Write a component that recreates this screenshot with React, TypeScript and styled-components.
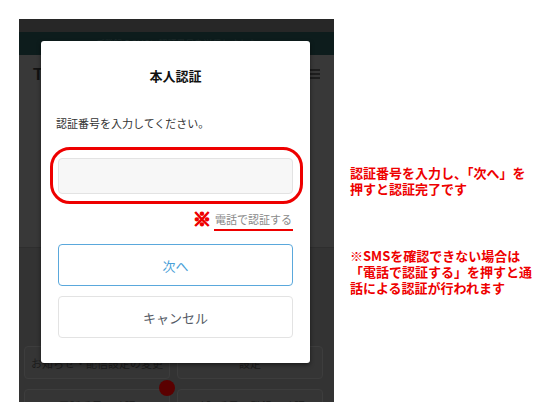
import styled, { createGlobalStyle } from 'styled-components';

const GlobalStyle = createGlobalStyle`
  *, *::before, *::after {
    box-sizing: border-box;
  }
  html, body {
    margin: 0;
    padding: 0;
    background: #ffffff;
  }
  body {
    font-family: "Noto Sans CJK JP", "Noto Sans", sans-serif;
  }
`;

const Page = styled.div`
  width: 553px;
  height: 412px;
  display: flex;
  align-items: flex-start;
  overflow: hidden;
`;

const Phone = styled.div`
  position: relative;
  width: 315px;
  height: 383px;
  margin: 19px 0 0 19px;
  background: #333333;
  display: flex;
  flex-direction: column;
  overflow: hidden;
  flex-shrink: 0;
`;

const StatusBar = styled.div`
  flex-shrink: 0;
  height: 13px;
  background: #272727;
`;

const Band = styled.div`
  flex-shrink: 0;
  height: 23px;
  background: #0d1c1c;
  display: flex;
  justify-content: center;
  align-items: center;
  font-size: 9px;
  color: #1e2b2b;
`;

const Header = styled.div`
  flex-shrink: 0;
  height: 193px;
  background: #383838;
  border-bottom: 1px solid #2e2e2e;
  display: flex;
  justify-content: space-between;
  align-items: flex-start;
  padding: 10px 14px 0 14px;
`;

const Logo = styled.div`
  font-family: "Liberation Sans", Arial, sans-serif;
  font-weight: bold;
  font-size: 17px;
  color: #121212;
`;

const Burger = styled.div`
  display: flex;
  flex-direction: column;
  gap: 2px;
  margin-top: 4px;
  span {
    display: block;
    width: 11px;
    height: 2px;
    background: #1e1e1e;
  }
`;

const Body = styled.div`
  flex-shrink: 0;
  padding: 98px 11px 0 5px;
  display: grid;
  grid-template-columns: 1fr 1fr;
  grid-auto-rows: 33px;
  row-gap: 10px;
  column-gap: 7px;
  position: relative;
`;

const Card = styled.div`
  background: #353535;
  border: 1px solid #3d3d3d;
  border-radius: 4px;
  display: flex;
  justify-content: center;
  align-items: center;
  font-size: 11px;
  color: #1c1c1c;
`;

const Dot = styled.div`
  position: absolute;
  left: 140px;
  top: 132px;
  width: 16px;
  height: 16px;
  border-radius: 50%;
  background: #5a0000;
`;

const Modal = styled.div`
  position: absolute;
  left: 22px;
  top: 22px;
  width: 269px;
  padding: 26px 17px 25px;
  background: #ffffff;
  border-radius: 3px;
  box-shadow: 0 2px 4px rgba(0, 0, 0, 0.5);
  display: flex;
  flex-direction: column;
`;

const Title = styled.h2`
  margin: 0;
  font-size: 13px;
  line-height: 18px;
  font-weight: bold;
  text-align: center;
  color: #111;
`;

const Lead = styled.p`
  margin: 30px 0 0 -2px;
  font-size: 11px;
  line-height: 16px;
  color: #333;
`;

const InputFrame = styled.div`
  margin: 16px -10px 0 -8px;
  padding: 8px 7px 7px 5px;
  border: 3px solid #ee0000;
  border-radius: 20px;
`;

const CodeInput = styled.input`
  display: block;
  width: 100%;
  height: 36px;
  background: #f7f7f7;
  border: 1px solid #e3e3e3;
  border-radius: 4px;
  outline: none;
`;

const PhoneRow = styled.div`
  margin-top: 2px;
  height: 24px;
  display: flex;
  justify-content: flex-end;
  align-items: center;
  gap: 3px;
`;

const Mark = styled.span`
  color: #ee0000;
  font-size: 18px;
  font-weight: bold;
  line-height: 1;
  -webkit-text-stroke: 1.6px #ee0000;
`;

const PhoneLink = styled.span`
  font-size: 11px;
  line-height: 16px;
  color: #8a8a8a;
  border-bottom: 2px solid #ee0000;
  padding: 0 1px 2px 1px;
  margin-top: 6px;
`;

const Button = styled.button<{ $primary?: boolean }>`
  display: block;
  width: 100%;
  height: 42px;
  margin-top: ${(p) => (p.$primary ? '14px' : '10px')};
  background: #ffffff;
  border: 1px solid ${(p) => (p.$primary ? '#5aa8dc' : '#e3e3e3')};
  border-radius: 4px;
  font-family: inherit;
  font-size: 13px;
  color: ${(p) => (p.$primary ? '#4a9fd8' : '#555b66')};
`;

const Notes = styled.div`
  margin: 165px 0 0 16px;
  display: flex;
  flex-direction: column;
  gap: 51px;
`;

const Note = styled.p`
  margin: 0;
  font-size: 13px;
  line-height: 16px;
  font-weight: bold;
  color: #ee0000;
  white-space: nowrap;
`;

function App() {
  return (
    <Page>
      <GlobalStyle />
      <Phone>
        <StatusBar />
        <Band>ご登録のSMSに認証番号を送信しました</Band>
        <Header>
          <Logo>T</Logo>
          <Burger>
            <span />
            <span />
            <span />
          </Burger>
        </Header>
        <Body>
          <Card>お知らせ・配信設定の変更</Card>
          <Card>設定</Card>
          <Card>電話番号の確認</Card>
          <Card>暗証番号の登録・確認</Card>
          <Dot />
        </Body>
        <Modal>
          <Title>本人認証</Title>
          <Lead>認証番号を入力してください。</Lead>
          <InputFrame>
            <CodeInput type="text" inputMode="numeric" />
          </InputFrame>
          <PhoneRow>
            <Mark>※</Mark>
            <PhoneLink>電話で認証する</PhoneLink>
          </PhoneRow>
          <Button $primary>次へ</Button>
          <Button>キャンセル</Button>
        </Modal>
      </Phone>
      <Notes>
        <Note>
          認証番号を入力し、「次へ」を
          <br />
          押すと認証完了です
        </Note>
        <Note>
          ※SMSを確認できない場合は
          <br />
          「電話で認証する」を押すと通
          <br />
          話による認証が行われます
        </Note>
      </Notes>
    </Page>
  );
}

export default App;
